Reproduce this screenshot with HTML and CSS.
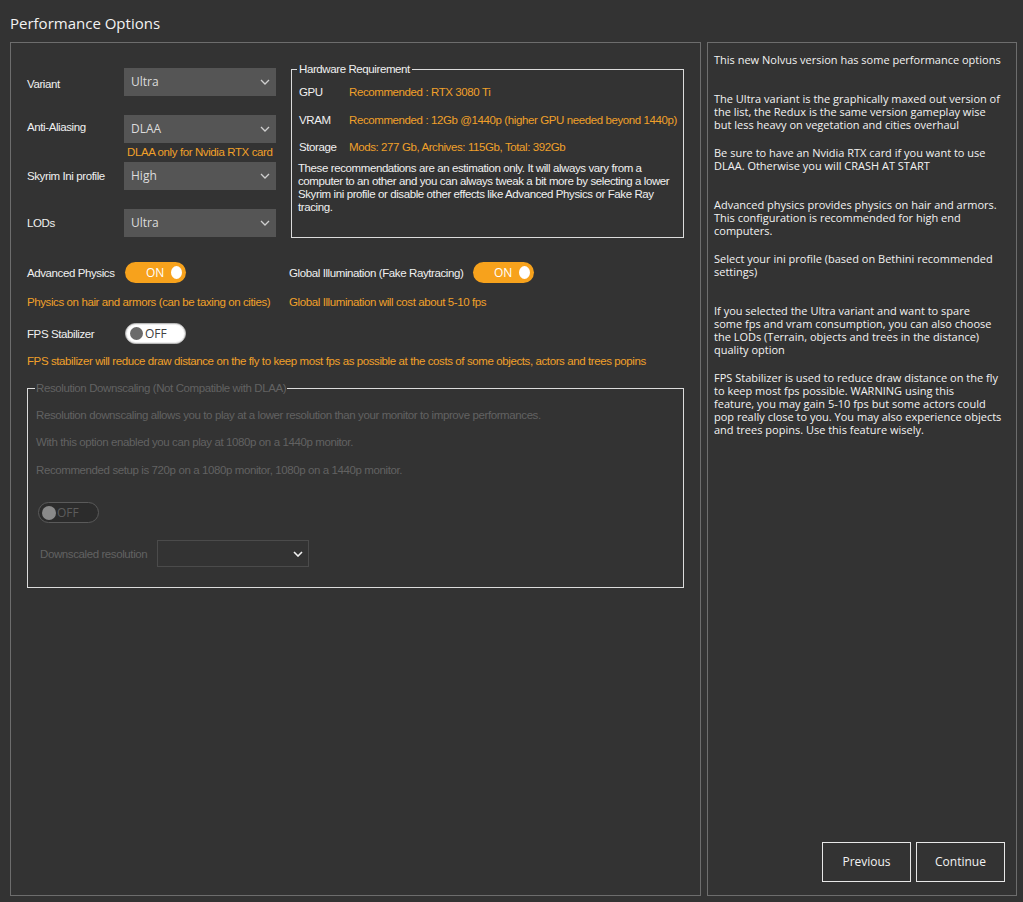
FILE: index.html
```html
<!DOCTYPE html>
<html>
<head>
<meta charset="utf-8">
<link rel="stylesheet" href="styles.css">
</head>
<body>
<div class="window">
  <h1 class="title">Performance Options</h1>
  <div class="main">
    <section class="options">
      <div class="upper">
        <div class="form">
          <div class="frow">
            <span class="flabel down">Variant</span>
            <div class="select"><span>Ultra</span><svg class="chev" width="10" height="6" viewBox="0 0 10 6"><polyline points="1,1 5,5 9,1" fill="none" stroke="#cfcfcf" stroke-width="1.3"/></svg></div>
          </div>
          <div class="frow aa">
            <span class="flabel up">Anti-Aliasing</span>
            <div class="select"><span>DLAA</span><svg class="chev" width="10" height="6" viewBox="0 0 10 6"><polyline points="1,1 5,5 9,1" fill="none" stroke="#cfcfcf" stroke-width="1.3"/></svg></div>
          </div>
          <div class="hint">DLAA only for Nvidia RTX card</div>
          <div class="frow">
            <span class="flabel">Skyrim Ini profile</span>
            <div class="select"><span>High</span><svg class="chev" width="10" height="6" viewBox="0 0 10 6"><polyline points="1,1 5,5 9,1" fill="none" stroke="#cfcfcf" stroke-width="1.3"/></svg></div>
          </div>
          <div class="frow last">
            <span class="flabel">LODs</span>
            <div class="select"><span>Ultra</span><svg class="chev" width="10" height="6" viewBox="0 0 10 6"><polyline points="1,1 5,5 9,1" fill="none" stroke="#cfcfcf" stroke-width="1.3"/></svg></div>
          </div>
        </div>
        <fieldset class="hw">
          <legend>Hardware Requirement</legend>
          <div class="hwgrid">
            <span class="hwk">GPU</span><span class="hwv">Recommended : RTX 3080 Ti</span>
            <span class="hwk">VRAM</span><span class="hwv">Recommended : 12Gb @1440p (higher GPU needed beyond 1440p)</span>
            <span class="hwk">Storage</span><span class="hwv">Mods: 277 Gb, Archives: 115Gb, Total: 392Gb</span>
          </div>
          <p class="hwnote">These recommendations are an estimation only. It will always vary from a computer to an other and you can always tweak a bit more by selecting a lower Skyrim ini profile or disable other effects like Advanced Physics or Fake Ray tracing.</p>
        </fieldset>
      </div>

      <div class="toggles">
        <div class="trow">
          <span class="tlabel">Advanced Physics</span>
          <span class="toggle on"><span class="ttext">ON</span><span class="knob"></span></span>
        </div>
        <div class="trow">
          <span class="tlabel gi">Global Illumination (Fake Raytracing)</span>
          <span class="toggle on"><span class="ttext">ON</span><span class="knob"></span></span>
        </div>
        <div class="desc">Physics on hair and armors (can be taxing on cities)</div>
        <div class="desc">Global Illumination will cost about 5-10 fps</div>
        <div class="trow">
          <span class="tlabel">FPS Stabilizer</span>
          <span class="toggle off"><span class="knob"></span><span class="ttext">OFF</span></span>
        </div>
        <div></div>
        <div class="desc wide">FPS stabilizer will reduce draw distance on the fly to keep most fps as possible at the costs of some objects, actors and trees popins</div>
      </div>

      <fieldset class="res">
        <legend>Resolution Downscaling (Not Compatible with DLAA)</legend>
        <p class="rline">Resolution downscaling allows you to play at a lower resolution than your monitor to improve performances.</p>
        <p class="rline">With this option enabled you can play at 1080p on a 1440p monitor.</p>
        <p class="rline third">Recommended setup is 720p on a 1080p monitor, 1080p on a 1440p monitor.</p>
        <span class="toggle dis"><span class="knob"></span><span class="ttext">OFF</span></span>
        <div class="drow">
          <span class="dlabel">Downscaled resolution</span>
          <div class="dselect"><svg class="chev" width="10" height="6" viewBox="0 0 10 6"><polyline points="1,1 5,5 9,1" fill="none" stroke="#f2f2f2" stroke-width="1.6"/></svg></div>
        </div>
      </fieldset>
    </section>

    <aside class="help">
      <div class="helptext">
        <p>This new Nolvus version has some performance options</p>
        <p class="gap2">The Ultra variant is the graphically maxed out version of<br>the list, the Redux is the same version gameplay wise<br>but less heavy on vegetation and cities overhaul</p>
        <p class="gap1">Be sure to have an Nvidia RTX card if you want to use<br>DLAA. Otherwise you will CRASH AT START</p>
        <p class="gap2">Advanced physics provides physics on hair and armors.<br>This configuration is recommended for high end<br>computers.</p>
        <p class="gap1">Select your ini profile (based on Bethini recommended<br>settings)</p>
        <p class="gap2">If you selected the Ultra variant and want to spare<br>some fps and vram consumption, you can also choose<br>the LODs (Terrain, objects and trees in the distance)<br>quality option</p>
        <p class="gap1">FPS Stabilizer is used to reduce draw distance on the fly<br>to keep most fps possible. WARNING using this<br>feature, you may gain 5-10 fps but some actors could<br>pop really close to you. You may also experience objects<br>and trees popins. Use this feature wisely.</p>
      </div>
      <div class="buttons">
        <button class="btn">Previous</button>
        <button class="btn">Continue</button>
      </div>
    </aside>
  </div>
</div>
</body>
</html>
```

FILE: styles.css
```css
* { box-sizing: border-box; }
html, body { margin: 0; padding: 0; }
body {
  background: #333333;
  width: 1023px;
  height: 902px;
  overflow: hidden;
  font-family: "Liberation Sans", Arial, sans-serif;
  font-size: 11.5px;
  color: #f0f0f0;
}
.window {
  padding: 13px 6px 0 10px;
}
.title {
  margin: 0 0 9px 0;
  font-family: "Open Sans", "Noto Sans", sans-serif;
  font-weight: 400;
  font-size: 15px;
  line-height: 20px;
  color: #f2f2f2;
}
.main {
  display: flex;
  gap: 6px;
}
.options {
  width: 691px;
  height: 854px;
  border: 1px solid #6d6d6d;
  padding: 19px 0 0 16px;
  letter-spacing: -0.4px;
}
.upper {
  display: flex;
  align-items: flex-start;
}
.form {
  width: 249px;
  margin-top: 6px;
  display: flex;
  flex-direction: column;
}
.frow {
  display: flex;
  align-items: center;
  height: 28px;
  margin-bottom: 19px;
}
.frow.aa, .frow.last { margin-bottom: 0; }
.flabel {
  width: 97px;
  white-space: nowrap;
}
.flabel.down { margin-top: 4px; }
.flabel.up { margin-top: -5px; }
.select {
  width: 152px;
  height: 28px;
  background: #555555;
  display: flex;
  align-items: center;
  justify-content: space-between;
  padding: 0 6px 0 7px;
  font-family: "Open Sans", "Noto Sans", sans-serif;
  font-size: 12px;
  letter-spacing: 0;
  color: #dcdcdc;
}
.select span { margin-top: -2px; }
.hint {
  color: #f0a02a;
  padding-left: 100px;
  line-height: 14px;
  height: 19px;
  padding-top: 2px;
  white-space: nowrap;
}
.hw {
  margin: 0 0 0 15px;
  width: 393px;
  min-width: 0;
  height: 176px;
  border: 1px solid #dcdcdc;
  padding: 0 6px 0 5px;
}
.hw legend {
  padding: 0 2px;
  line-height: 14px;
  color: #f0f0f0;
}
.hwgrid {
  display: grid;
  grid-template-columns: 50px 1fr;
  grid-auto-rows: 14px;
  row-gap: 13.5px;
  padding: 9px 0 0 2px;
  line-height: 14px;
}
.hwv { color: #f0a02a; white-space: nowrap; }
.hwnote {
  margin: 8px 0 0 1px;
  line-height: 13px;
  color: #f0f0f0;
}
.toggles {
  display: grid;
  grid-template-columns: 262px 1fr;
  margin-top: 24px;
  align-items: center;
}
.trow {
  display: flex;
  align-items: center;
  height: 21px;
}
.tlabel { width: 98px; white-space: nowrap; }
.tlabel.gi { width: 184px; }
.desc {
  color: #f0a02a;
  line-height: 14px;
  margin: 12px 0 14px 0;
  white-space: nowrap;
}
.desc.wide { grid-column: 1 / 3; margin: 10px 0 0 0; }
.toggle {
  width: 61px;
  height: 21px;
  border-radius: 11px;
  display: inline-flex;
  align-items: center;
  font-family: "Open Sans", "Noto Sans", sans-serif;
  font-size: 12px;
  letter-spacing: 0;
}
.toggle .knob {
  width: 13px;
  height: 13px;
  border-radius: 50%;
  display: block;
}
.toggle.on {
  background: #f7a21c;
  color: #ffffff;
  padding: 0 4px 0 21px;
}
.toggle.on .ttext { width: 29px; }
.toggle.on .knob { background: #ffffff; }
.toggle.off {
  background: #ffffff;
  border: 1px solid #b8b8b8;
  box-shadow: inset 0 0 0 1px #ececec;
  color: #404040;
  padding: 0 0 0 4px;
}
.toggle.off .knob { background: #6a6a6a; margin-right: 2px; }
.toggle.dis {
  display: flex;
  background: #2c2c2c;
  border: 1px solid #5a5a5a;
  color: #5c5c5c;
  padding: 0 0 0 3px;
  margin: 25px 0 0 3px;
}
.toggle.dis .knob { background: #8a8a8a; width: 14px; height: 14px; margin-right: 1px; }
.res {
  margin: 13px 0 0 0;
  width: 657px;
  min-width: 0;
  height: 207px;
  border: 1px solid #dcdcdc;
  padding: 0 10px 0 7px;
  color: #626262;
}
.res legend {
  padding: 0 1px;
  line-height: 14px;
  color: #626262;
}
.rline {
  margin: 13px 0 0 1px;
  line-height: 14px;
  white-space: nowrap;
}
.rline.third { margin-top: 14px; }
.drow {
  display: flex;
  align-items: center;
  margin: 17px 0 0 5px;
}
.dlabel { width: 117px; white-space: nowrap; }
.dselect {
  width: 152px;
  height: 27px;
  border: 1px solid #4b4b4b;
  display: flex;
  align-items: center;
  justify-content: flex-end;
  padding-right: 5px;
}
.help {
  width: 310px;
  height: 854px;
  border: 1px solid #6d6d6d;
  display: flex;
  flex-direction: column;
  padding: 10px 0 0 6px;
  font-family: "Open Sans", "Noto Sans", sans-serif;
  font-size: 11px;
  color: #f2f2f2;
}
.helptext { width: 300px; white-space: nowrap; }
.helptext p {
  margin: 0;
  line-height: 13px;
}
.helptext p.gap1 { margin-top: 15px; }
.helptext p.gap2 { margin-top: 26px; }
.buttons {
  margin-top: auto;
  display: flex;
  justify-content: flex-end;
  gap: 5px;
  padding: 0 11px 13px 0;
}
.btn {
  width: 89px;
  height: 40px;
  background: transparent;
  border: 1px solid #e8e8e8;
  color: #f2f2f2;
  font-family: "Open Sans", "Noto Sans", sans-serif;
  font-size: 12px;
  padding: 0 0 2px 0;
}
```
